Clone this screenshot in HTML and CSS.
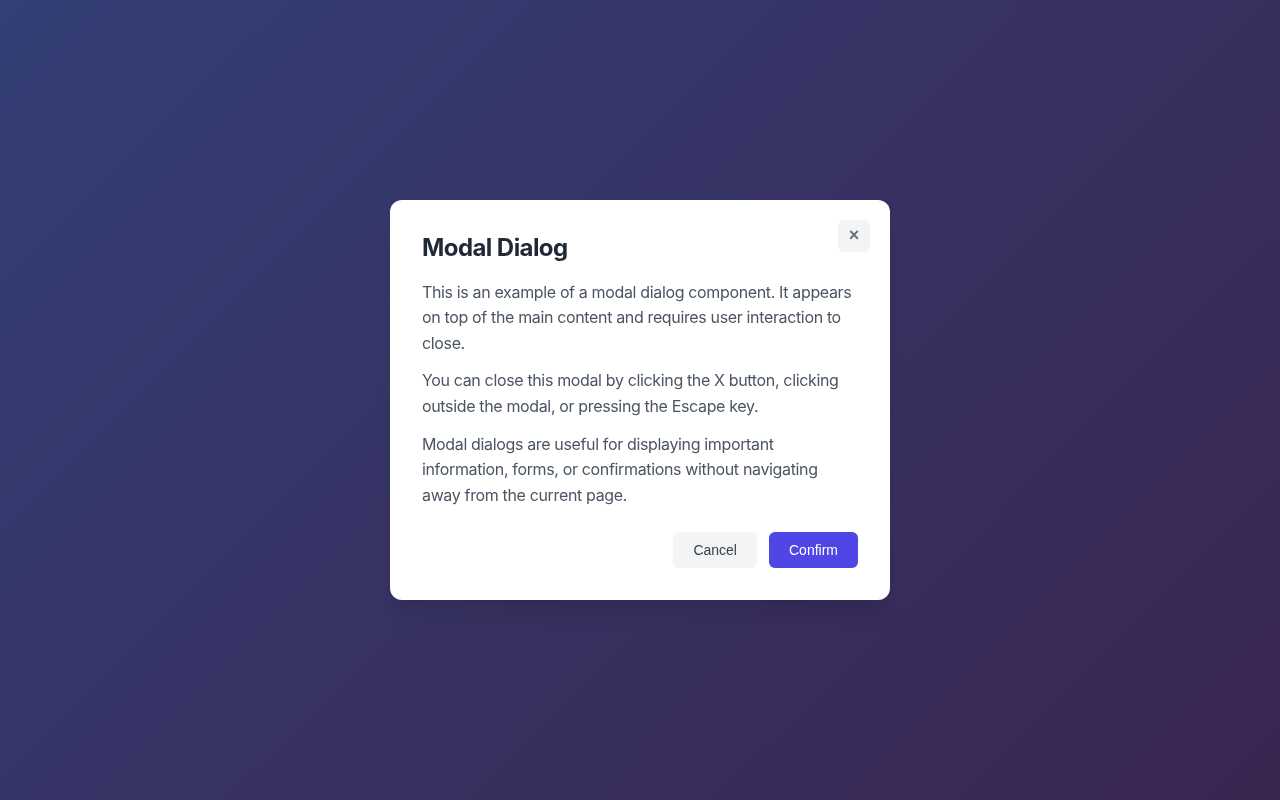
FILE: index.html
```html
<!DOCTYPE html>
<html lang="en">
<head>
<meta charset="utf-8">
<title>Modal Dialog</title>
<link rel="stylesheet" href="styles.css">
</head>
<body>
<div class="overlay">
  <div class="modal" role="dialog" aria-labelledby="modal-title">
    <button class="close" aria-label="Close">×</button>
    <h2 id="modal-title" class="title">Modal Dialog</h2>
    <div class="content">
      <p>This is an example of a modal dialog component. It appears on top of the main content and requires user interaction to close.</p>
      <p>You can close this modal by clicking the X button, clicking outside the modal, or pressing the Escape key.</p>
      <p>Modal dialogs are useful for displaying important information, forms, or confirmations without navigating away from the current page.</p>
    </div>
    <div class="footer">
      <button class="btn btn-cancel">Cancel</button>
      <button class="btn btn-confirm">Confirm</button>
    </div>
  </div>
</div>
</body>
</html>
```
FILE: styles.css
```css
html, body {
  margin: 0;
  padding: 0;
  height: 100%;
}
body {
  font-family: Inter, "Noto Sans", sans-serif;
  background: linear-gradient(135deg, #667eea 0%, #764ba2 100%);
  min-height: 100vh;
}
.overlay {
  position: fixed;
  inset: 0;
  background: rgba(0, 0, 0, 0.5);
  display: flex;
  align-items: center;
  justify-content: center;
}
.modal {
  position: relative;
  box-sizing: border-box;
  width: 500px;
  height: 400px;
  background: #ffffff;
  border-radius: 12px;
  padding: 32px;
  box-shadow: 0 20px 25px -5px rgba(0, 0, 0, 0.1), 0 10px 10px -5px rgba(0, 0, 0, 0.04);
  display: flex;
  flex-direction: column;
}
.close {
  position: absolute;
  top: 20px;
  right: 20px;
  width: 32px;
  height: 32px;
  border: none;
  border-radius: 6px;
  background: #f3f4f6;
  color: #6b7280;
  font-family: "Liberation Sans", Arial, sans-serif;
  font-size: 18px;
  font-weight: 700;
  line-height: 1;
  padding: 0 0 2px;
  display: flex;
  align-items: center;
  justify-content: center;
}
.title {
  margin: 0 0 16.5px;
  font-size: 24px;
  font-weight: 700;
  line-height: 1.3;
  letter-spacing: -0.024em;
  color: #1f2937;
}
.content p {
  margin: 0 0 12px;
  font-size: 16px;
  line-height: 1.6;
  letter-spacing: -0.022em;
  color: #4b5563;
}
.content p:last-child {
  margin-bottom: 0;
}
.footer {
  margin-top: 24px;
  display: flex;
  justify-content: flex-end;
  gap: 12px;
}
.btn {
  border: none;
  border-radius: 6px;
  padding: 10px 20px;
  font-family: "Liberation Sans", Arial, sans-serif;
  font-size: 14px;
  font-weight: 500;
  line-height: 16px;
}
.btn-cancel {
  background: #f3f4f6;
  color: #374151;
}
.btn-confirm {
  background: #4f46e5;
  color: #ffffff;
}
```
